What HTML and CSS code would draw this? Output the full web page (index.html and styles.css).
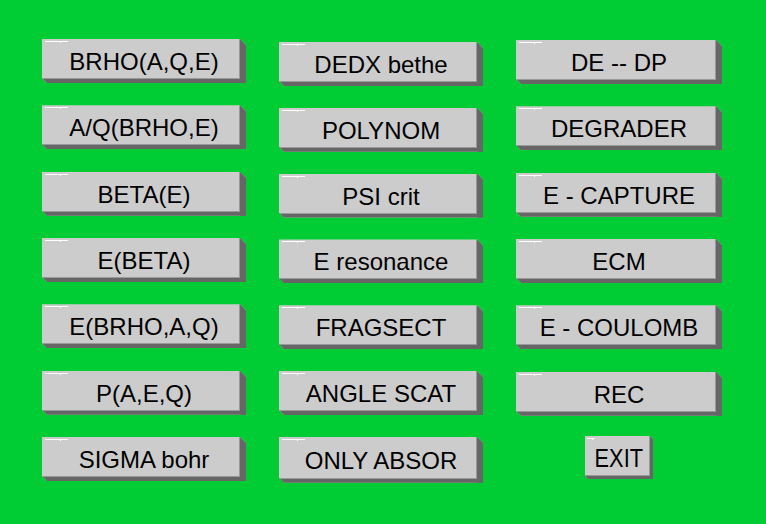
FILE: index.html
```html
<!DOCTYPE html>
<html>
<head>
<meta charset="utf-8">
<link rel="stylesheet" href="styles.css">
</head>
<body>
<div class="panel">
  <div class="col col1">
    <div class="btn">BRHO(A,Q,E)</div>
    <div class="btn">A/Q(BRHO,E)</div>
    <div class="btn">BETA(E)</div>
    <div class="btn">E(BETA)</div>
    <div class="btn">E(BRHO,A,Q)</div>
    <div class="btn">P(A,E,Q)</div>
    <div class="btn">SIGMA bohr</div>
  </div>
  <div class="col col2">
    <div class="btn">DEDX bethe</div>
    <div class="btn">POLYNOM</div>
    <div class="btn">PSI crit</div>
    <div class="btn">E resonance</div>
    <div class="btn">FRAGSECT</div>
    <div class="btn">ANGLE SCAT</div>
    <div class="btn tall">ONLY ABSOR</div>
  </div>
  <div class="col col3">
    <div class="btn">DE -- DP</div>
    <div class="btn">DEGRADER</div>
    <div class="btn">E - CAPTURE</div>
    <div class="btn">ECM</div>
    <div class="btn">E - COULOMB</div>
    <div class="btn">REC</div>
    <div class="btn exit"><span class="exit-text">EXIT</span></div>
  </div>
</div>
</body>
</html>
```
FILE: styles.css
```css
html, body {
  margin: 0;
  padding: 0;
  background: #00cc33;
}
body {
  width: 766px;
  height: 524px;
  overflow: hidden;
  font-family: "Liberation Sans", Arial, sans-serif;
}
.panel {
  display: grid;
  grid-template-columns: 204px 204px 206px;
  column-gap: 33px;
  padding: 39px 0 0 42px;
  align-items: start;
}
.col {
  display: flex;
  flex-direction: column;
  gap: 22.33px;
}
.col2 {
  margin-top: 3px;
  gap: 21.8px;
}
.col3 {
  margin-top: 1px;
}
.btn {
  position: relative;
  height: 40px;
  background: #cccccc;
  border-right: 6px solid #666666;
  border-bottom: 4px solid #666666;
  padding-left: 6px;
  color: #000000;
  font-size: 24px;
  line-height: 46px;
  text-align: center;
  white-space: nowrap;
  clip-path: polygon(0 0, calc(100% - 6px) 0, 100% 6px, 100% 100%, 5px 100%, 0 calc(100% - 5px));
  box-shadow: inset -1px -1px 0 #999999;
}
.btn::before {
  content: "";
  position: absolute;
  top: 2px;
  left: 3px;
  width: 23px;
  height: 1px;
  background: #ffffff;
}
.btn::after {
  content: "";
  position: absolute;
  top: 2px;
  left: 18px;
  width: 1px;
  height: 2px;
  background: #ffffff;
}
.tall {
  height: 42px;
  line-height: 48px;
}
.exit {
  align-self: center;
  width: 62px;
  height: 40px;
  padding-left: 3px;
  margin-top: -2px;
  border-right-width: 3px;
  border-bottom-width: 3px;
  clip-path: polygon(0 0, calc(100% - 3px) 0, 100% 3px, 100% 100%, 3px 100%, 0 calc(100% - 3px));
}
.exit::before {
  left: 2px;
  width: 8px;
}
.exit::after {
  left: 7px;
}
.exit-text {
  display: inline-block;
  font-size: 25px;
  transform: scaleX(0.87);
  line-height: 44px;
}
```
